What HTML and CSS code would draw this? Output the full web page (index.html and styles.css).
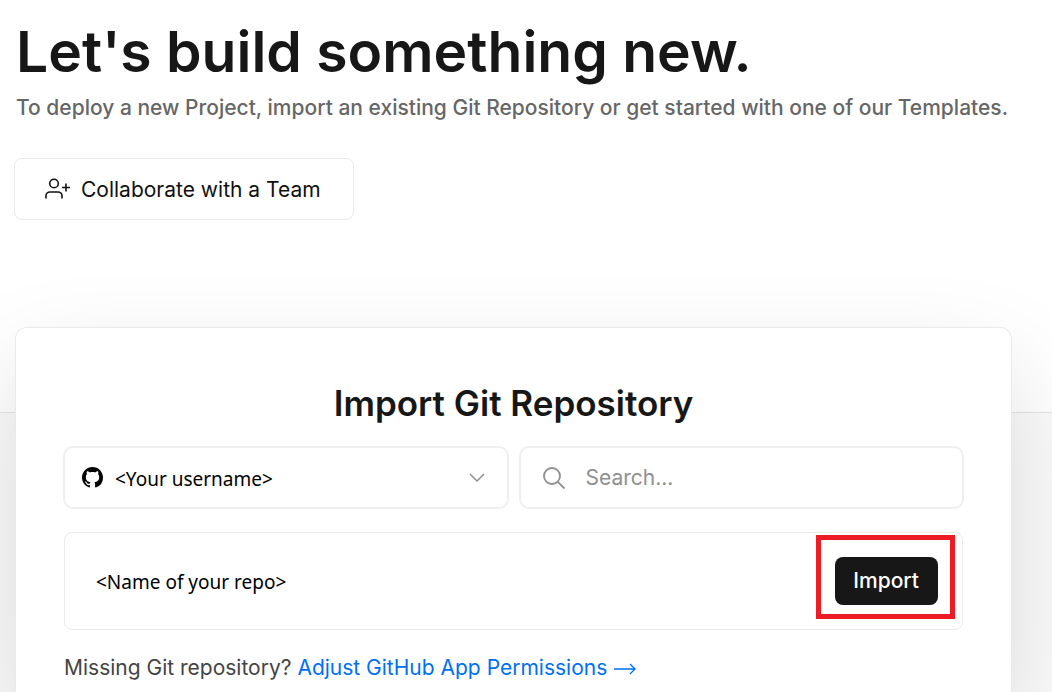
FILE: index.html
```html
<!DOCTYPE html>
<html lang="en">
<head>
<meta charset="utf-8">
<meta name="viewport" content="width=device-width, initial-scale=1">
<title>New Project</title>
<link rel="stylesheet" href="styles.css">
</head>
<body>
<header class="intro">
  <h1 class="intro-title">Let's build something new.</h1>
  <p class="intro-text">To deploy a new Project, import an existing Git Repository or get started with one of our Templates.</p>
  <button class="team-button" type="button">
    <svg class="team-icon" viewBox="0 0 26 22" aria-hidden="true">
      <circle cx="9" cy="5.500" r="4.300"/>
      <path d="M1 20.500v-2.500a4 4 0 0 1 4-4h8a4 4 0 0 1 4 4v2.500M17 9.500h8M21 5.500v8"/>
    </svg>
    Collaborate with a Team
  </button>
</header>
<main class="band">
  <section class="card">
    <h2 class="card-title">Import Git Repository</h2>
    <div class="filters">
      <div class="field">
        <svg class="github-icon" viewBox="0 0 16 16" aria-hidden="true">
          <path d="M8 0C3.58 0 0 3.58 0 8c0 3.54 2.29 6.53 5.47 7.59.4.07.55-.17.55-.38 0-.19-.01-.82-.01-1.49-2.01.37-2.53-.49-2.69-.94-.09-.23-.48-.94-.82-1.13-.28-.15-.68-.52-.01-.53.63-.01 1.08.58 1.23.82.72 1.21 1.87.87 2.33.66.07-.52.28-.87.51-1.07-1.78-.2-3.64-.89-3.64-3.95 0-.87.31-1.59.82-2.15-.08-.2-.36-1.02.08-2.12 0 0 .67-.21 2.2.82.64-.18 1.32-.27 2-.27s1.36.09 2 .27c1.53-1.04 2.2-.82 2.2-.82.44 1.1.16 1.92.08 2.12.51.56.82 1.27.82 2.15 0 3.07-1.87 3.75-3.65 3.95.29.25.54.73.54 1.48 0 1.07-.01 1.93-.01 2.2 0 .21.15.46.55.38A8.01 8.01 0 0 0 16 8c0-4.42-3.58-8-8-8z"/>
        </svg>
        <select class="control account" aria-label="Git account">
          <option>&lt;Your username&gt;</option>
        </select>
        <svg class="chevron-icon" viewBox="0 0 16 10" aria-hidden="true"><path d="M1 1l7 7 7-7"/></svg>
      </div>
      <div class="field">
        <svg class="search-icon" viewBox="0 0 24 24" aria-hidden="true">
          <circle cx="10" cy="10" r="8"/><path d="M15.800 15.800L22.500 22.500"/>
        </svg>
        <input class="control search" type="search" placeholder="Search..." aria-label="Search repositories">
      </div>
    </div>
    <div class="repo">
      <span class="repo-name">&lt;Name of your repo&gt;</span>
      <div class="highlight"><button class="import-button" type="button">Import</button></div>
    </div>
    <p class="missing">Missing Git repository? <a class="link" href="#">Adjust GitHub App Permissions
      <svg class="arrow-icon" viewBox="0 0 24 12" aria-hidden="true"><path d="M1 6h21M17 1l5 5-5 5"/></svg></a></p>
  </section>
</main>
</body>
</html>
```

FILE: styles.css
```css
* {
  box-sizing: border-box;
}

body {
  display: flex;
  flex-direction: column;
  min-height: 100vh;
  margin: 0;
  background: #fff;
  color: #171717;
  font-family: Inter, "Liberation Sans", sans-serif;
  font-size: 21px;
}

h1,
h2,
p {
  margin: 0;
}

svg {
  flex: none;
  fill: none;
  stroke: currentColor;
}

.intro {
  flex: none;
  padding: 16px 14px 192px;
}

.intro-title {
  padding-left: 2px;
  font-size: 57px;
  font-weight: 600;
  line-height: 72px;
}

.intro-text {
  margin-top: 4px;
  padding-left: 2px;
  color: #666;
  font-weight: 500;
  line-height: 32px;
}

.team-button {
  display: flex;
  align-items: center;
  gap: 10px;
  height: 62px;
  margin-top: 34px;
  padding: 0 32px 0 30px;
  border: 1px solid #eaeaea;
  border-radius: 8px;
  background: #fff;
  color: #111;
  font: inherit;
}

.team-icon {
  width: 26px;
  height: 22px;
  stroke-width: 1.6;
}

.band {
  display: flex;
  flex: 1;
  flex-direction: column;
  padding: 0 40px 0 15px;
  border-top: 1px solid #e4e4e4;
  background: #fafafa;
}

.card {
  flex: 1;
  margin-top: -86px;
  padding: 51px 47px 4px;
  border: 1px solid #eaeaea;
  border-bottom: 0;
  border-radius: 12px 12px 0 0;
  background: #fff;
  box-shadow: 0 40px 100px rgba(0, 0, 0, 0.13);
}

.card-title {
  font-size: 35px;
  font-weight: 600;
  line-height: 48px;
  text-align: center;
}

.filters {
  display: grid;
  grid-template-columns: 1fr 1fr;
  gap: 10px;
  margin-top: 19px;
}

.field {
  display: grid;
  align-items: center;
}

.field > * {
  grid-area: 1 / 1;
}

.control {
  width: 100%;
  height: 63px;
  border: 2px solid #efefef;
  border-radius: 10px;
  background: transparent;
  appearance: none;
}

.account {
  padding: 2px 48px 0 50px;
  color: #000;
  font: 19px "Noto Sans", sans-serif;
}

.search {
  padding: 0 20px 0 65px;
  color: inherit;
  font: inherit;
}

.search::placeholder {
  color: #8f8f8f;
}

.github-icon {
  width: 21px;
  height: 21px;
  margin-left: 19px;
  fill: #000;
  stroke: none;
}

.chevron-icon {
  justify-self: end;
  width: 16px;
  height: 10px;
  margin-right: 24px;
  color: #8f8f8f;
  stroke-width: 1.5;
}

.search-icon {
  width: 24px;
  height: 24px;
  margin-left: 23px;
  color: #8f8f8f;
  stroke-width: 1.8;
}

.repo {
  display: flex;
  align-items: center;
  justify-content: space-between;
  height: 98px;
  margin: 23px 1px 0;
  padding: 0 7px 8px 31px;
  border: 1px solid #eaeaea;
  border-radius: 8px;
}

.repo-name {
  padding-top: 10px;
  color: #000;
  font: 19px "Noto Sans", sans-serif;
}

.highlight {
  padding: 17px 12px 9px 14px;
  border: 5px solid #ed1c24;
}

.import-button {
  display: block;
  height: 48px;
  padding: 0 19px 1px 18px;
  border: 0;
  border-radius: 8px;
  background: #171717;
  color: #fff;
  font: inherit;
  font-weight: 500;
}

.missing {
  margin: 22px 1px 0;
  color: #444;
  line-height: 32px;
}

.link {
  color: #0070f3;
  text-decoration: none;
}

.arrow-icon {
  width: 24px;
  height: 12px;
  stroke-width: 1.3;
}
```
